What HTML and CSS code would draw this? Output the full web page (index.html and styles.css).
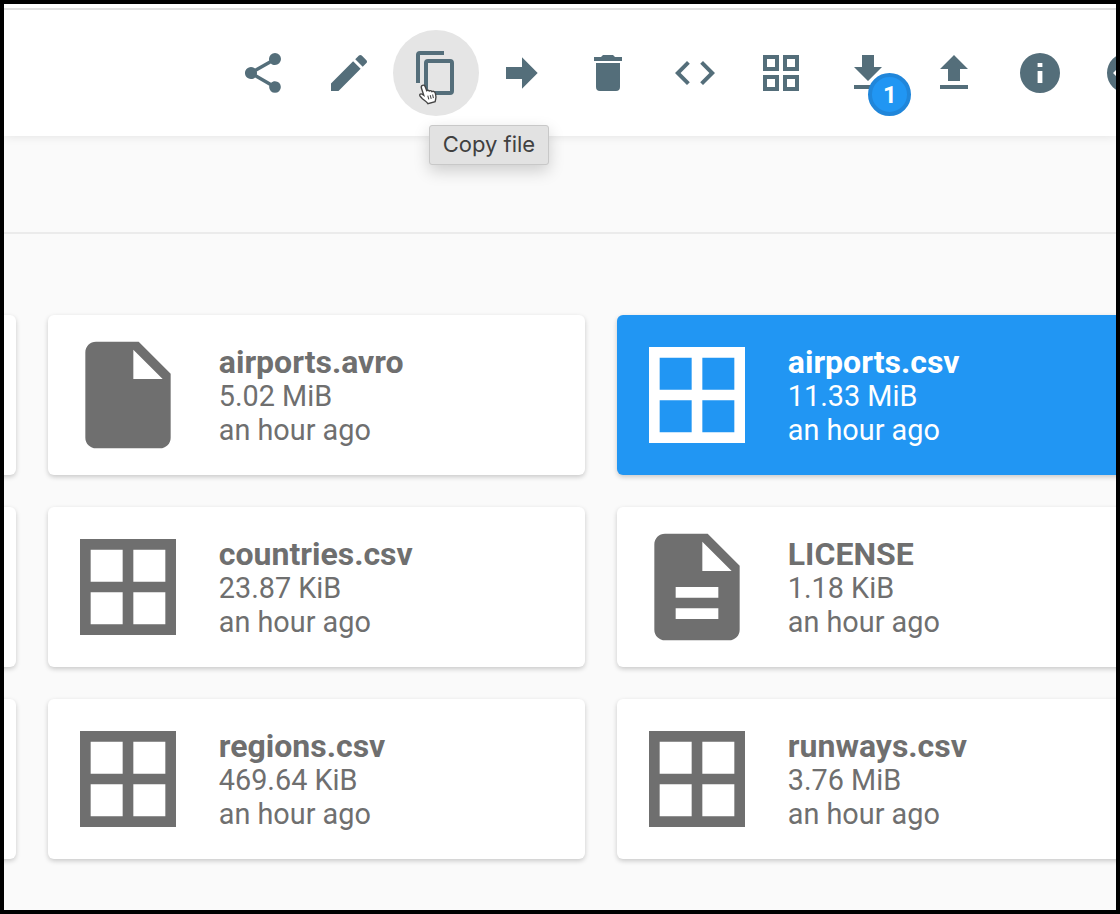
FILE: index.html
```
<!DOCTYPE html>
<html lang="en">
<head>
<meta charset="utf-8">
<title>Files</title>
<link rel="stylesheet" href="styles.css">
</head>
<body>
<svg class="defs" width="0" height="0" aria-hidden="true">
  <symbol id="table" viewBox="0 0 24 24"><path fill-rule="evenodd" d="M3 3h18v18H3zM5 5v6h6V5zM13 5v6h6V5zM5 13v6h6v-6zM13 13v6h6v-6z"/></symbol>
  <symbol id="file" viewBox="0 0 24 24"><path d="M13 9V3.500L18.500 9M6 2C4.890 2 4 2.890 4 4v16a2 2 0 0 0 2 2h12a2 2 0 0 0 2-2V8l-6-6z"/></symbol>
  <symbol id="doc" viewBox="0 0 24 24"><path d="M13 9h5.500L13 3.500V9M6 2h8l6 6v12a2 2 0 0 1-2 2H6a2 2 0 0 1-2-2V4c0-1.110.890-2 2-2m10 16v-2H8v2h8m0-4v-2H8v2h8z"/></symbol>
</svg>
<div class="window">
  <header class="toolbar">
    <button class="tool"><svg viewBox="0 0 24 24"><path d="M18 16.080c-.760 0-1.440.300-1.960.770L8.910 12.700c.050-.230.090-.460.090-.700s-.040-.470-.090-.700l7.050-4.110c.540.500 1.250.810 2.040.810a3 3 0 1 0-3-3c0 .240.040.470.090.700L8.040 9.810A3 3 0 1 0 6 15c.790 0 1.500-.310 2.040-.810l7.120 4.150c-.050.210-.080.430-.080.660a2.920 2.920 0 1 0 2.920-2.920z"/></svg></button>
    <button class="tool"><svg viewBox="0 0 24 24"><path d="M20.710 7.040c.390-.390.390-1.040 0-1.410l-2.340-2.340c-.370-.390-1.020-.390-1.410 0l-1.840 1.830 3.750 3.750M3 17.250V21h3.750L17.810 9.930l-3.750-3.750L3 17.250z"/></svg></button>
    <button class="tool active"><svg viewBox="0 0 24 24"><path d="M19 21H8V7h11m0-2H8a2 2 0 0 0-2 2v14a2 2 0 0 0 2 2h11a2 2 0 0 0 2-2V7a2 2 0 0 0-2-2m-3-4H4a2 2 0 0 0-2 2v14h2V3h12V1z"/></svg>
      <svg class="cursor" viewBox="0 0 18 20"><path d="M3.200 1.300c1.300-.700 2.300.100 2.800 1.500l1.300 3.600c.900-.600 1.900-.300 2.500.300.900-.600 1.900-.200 2.400.500 1.700-.700 2.900.100 3.400 2 .600 2.300.800 3.600.200 5.400l-.500 2.200-6.900 1.900c-1.300-2-3.100-2.800-5.200-4.700L.900 11.400c-1-1.500.900-2.600 2.400-1.400l1.200.8L2.300 4.100c-.400-1.200-.200-2.300.900-2.800z"/><path class="crease" d="M8.300 11l1 3.700M10.600 10.500l1 3.600M12.900 10l.8 3.500"/></svg>
      <span class="tooltip">Copy file</span></button>
    <button class="tool"><svg viewBox="0 0 24 24"><path d="M4 15V9h8V4.160L19.840 12 12 19.840V15H4z"/></svg></button>
    <button class="tool"><svg viewBox="0 0 24 24"><path d="M19 4h-3.500l-1-1h-5l-1 1H5v2h14M6 19a2 2 0 0 0 2 2h8a2 2 0 0 0 2-2V7H6v12z"/></svg></button>
    <button class="tool"><svg viewBox="0 0 24 24"><path d="M14.600 16.600l4.600-4.600-4.600-4.600L16 6l6 6-6 6-1.400-1.400m-5.200 0L4.800 12l4.600-4.600L8 6l-6 6 6 6 1.400-1.400z"/></svg></button>
    <button class="tool"><svg viewBox="0 0 24 24"><path fill-rule="evenodd" d="M3 3h8v8H3zM5 5v4h4V5zM13 3h8v8h-8zM15 5v4h4V5zM3 13h8v8H3zM5 15v4h4v-4zM13 13h8v8h-8zM15 15v4h4v-4z"/></svg></button>
    <button class="tool"><svg viewBox="0 0 24 24"><path d="M5 20h14v-2H5m14-9h-4V3H9v6H5l7 7 7-7z"/></svg><span class="badge">1</span></button>
    <button class="tool"><svg viewBox="0 0 24 24"><path d="M9 16v-6H5l7-7 7 7h-4v6H9m-4 4v-2h14v2H5z"/></svg></button>
    <button class="tool"><svg viewBox="0 0 24 24"><path d="M13.200 9h-2.400V7h2.400m0 10h-2.400v-6h2.400M12 2a10 10 0 1 0 0 20 10 10 0 0 0 0-20z"/></svg></button>
    <button class="tool"><svg viewBox="0 0 24 24"><path fill-rule="evenodd" d="M12 2a10 10 0 1 0 0 20 10 10 0 0 0 0-20zM5 12l3.500-3.500 1.400 1.400L7.800 12l2.100 2.100-1.400 1.400z"/></svg></button>
  </header>
  <div class="crumbs"></div>
  <main class="files">
    <div class="card"></div>
    <div class="card"><svg><use href="#file"/></svg><div class="info"><b>airports.avro</b><span>5.02 MiB</span><span>an hour ago</span></div></div>
    <div class="card selected"><svg><use href="#table"/></svg><div class="info"><b>airports.csv</b><span>11.33 MiB</span><span>an hour ago</span></div></div>
    <div class="card"></div>
    <div class="card"><svg><use href="#table"/></svg><div class="info"><b>countries.csv</b><span>23.87 KiB</span><span>an hour ago</span></div></div>
    <div class="card"><svg><use href="#doc"/></svg><div class="info"><b>LICENSE</b><span>1.18 KiB</span><span>an hour ago</span></div></div>
    <div class="card"></div>
    <div class="card"><svg><use href="#table"/></svg><div class="info"><b>regions.csv</b><span>469.64 KiB</span><span>an hour ago</span></div></div>
    <div class="card"><svg><use href="#table"/></svg><div class="info"><b>runways.csv</b><span>3.76 MiB</span><span>an hour ago</span></div></div>
  </main>
</div>
</body>
</html>
```
FILE: styles.css
```
* { box-sizing: border-box; }
body { margin: 0; font-family: Roboto, sans-serif; overflow: hidden; }
.defs { display: block; }
.window {
  width: 1120px; height: 914px; border: 4px solid #000;
  background: #fafafa; overflow: hidden; display: flex; flex-direction: column;
}
.toolbar {
  flex: none; height: 132px; display: flex; align-items: center;
  padding: 6px 0 0 215.600px; background: #fff;
  background-image: linear-gradient(#fff 4px, #e0e0e0 4px, #e0e0e0 6px, #fff 6px);
  box-shadow: 0 0 10px rgba(0, 0, 0, .1); position: relative; z-index: 1;
}
.tool {
  position: relative; flex: none; width: 86.400px; height: 86px; padding: 0;
  border: 0; border-radius: 50%; background: none;
  display: flex; align-items: center; justify-content: center;
}
.tool > svg { width: 48px; height: 48px; fill: #546e7a; }
.tool.active { width: 86px; margin-left: .4px; background: #e5e5e5; }
.tool > .cursor {
  position: absolute; left: 26px; top: 54px; width: 19px; height: 21px;
  fill: #fff; stroke: #444; stroke-width: 1.300; overflow: visible;
}
.cursor .crease { fill: none; stroke-width: 1; }
.tooltip {
  position: absolute; left: 36.200px; top: 95px; width: 120px; height: 40px;
  border: 1px solid #c8c8c8; border-radius: 3px; background: #e2e2e2; color: #404040;
  font: 22px/37px Inter, sans-serif; letter-spacing: 0; white-space: nowrap; text-align: center;
  box-shadow: 0 6px 16px rgba(0, 0, 0, .18);
}
.badge {
  position: absolute; left: 44px; top: 43px; width: 43px; height: 43px;
  border: 4px solid #2086da; border-radius: 50%; background: #2196f3;
  color: #fff; font: bold 24px/36px Roboto, sans-serif; text-align: center;
}
.crumbs { flex: none; height: 98px; border-bottom: 2px solid #ebebeb; }
.files {
  display: grid; grid-template-columns: repeat(3, 537px); grid-auto-rows: 160px;
  gap: 32px; margin: 81px 0 0 -525px;
}
.card {
  display: flex; align-items: center; padding: 0 16px; gap: 26.800px;
  border-radius: 6px; background: #fff; color: #6f6f6f;
  box-shadow: 0 2px 5px rgba(0, 0, 0, .2);
}
.card svg { flex: none; width: 128px; height: 128px; fill: currentColor; }
.selected { background: #2196f3; color: #fff; }
.info { display: flex; flex-direction: column; padding-top: 2px; font-size: 28.800px; line-height: 34px; white-space: nowrap; }
.info b { font-size: 32px; font-weight: 700; }
```
